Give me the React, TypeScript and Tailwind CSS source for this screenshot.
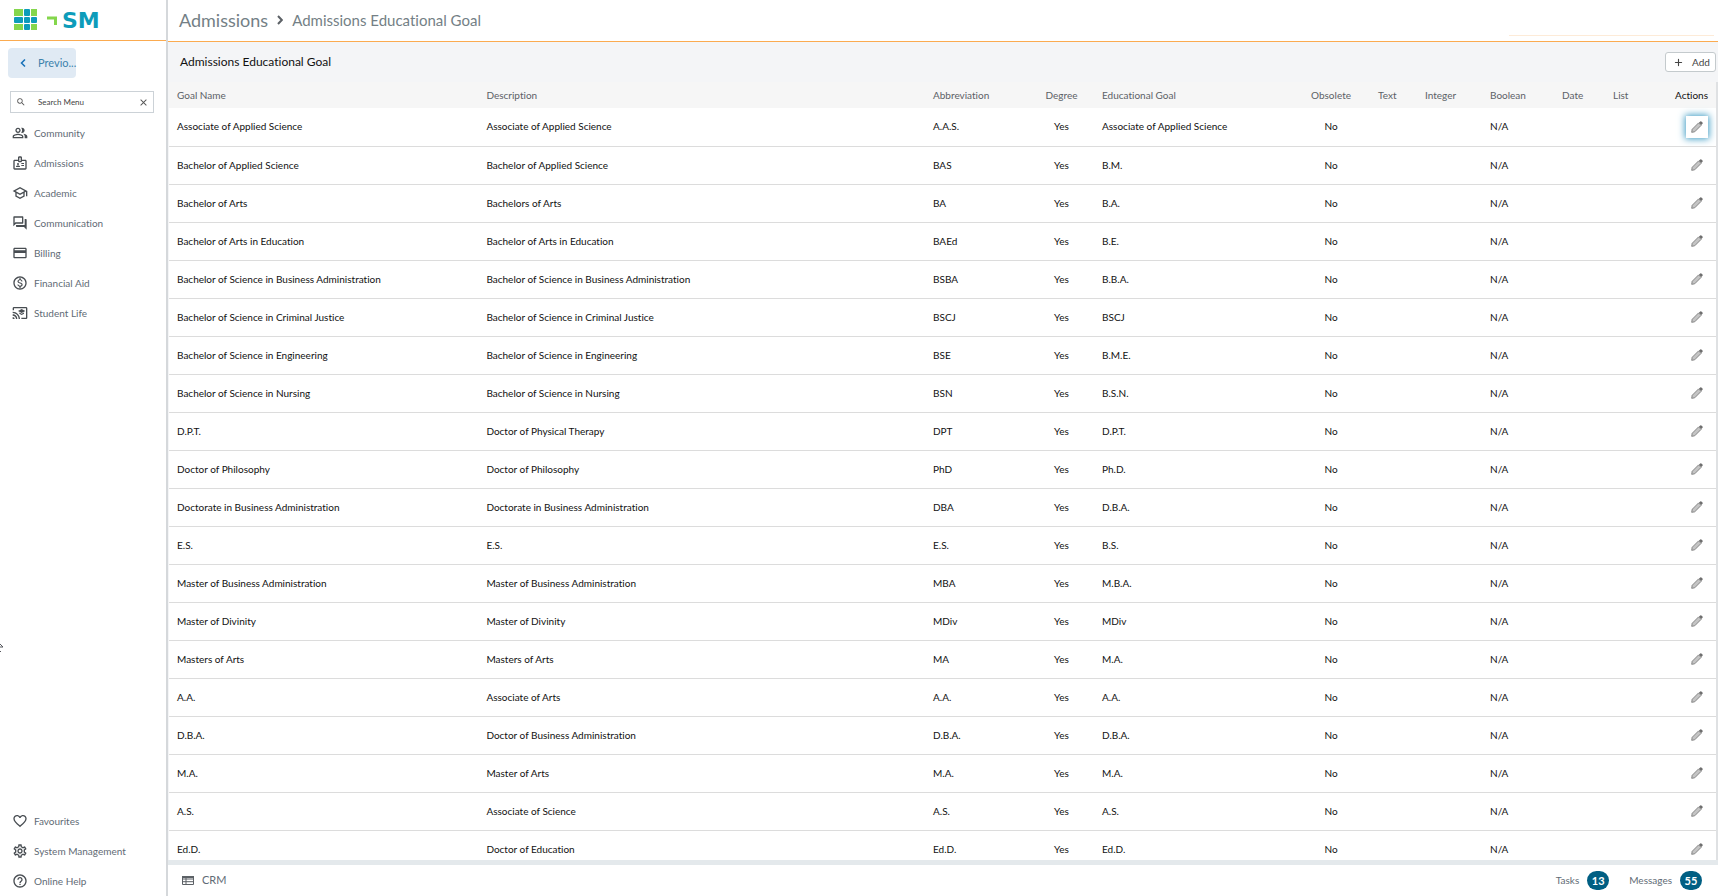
import { useState } from "react";
import { FaPlus } from "react-icons/fa6";
import {
  MdClose,
  MdFavoriteBorder,
  MdHelpOutline,
  MdOutlineBadge,
  MdOutlineCastForEducation,
  MdOutlineCreditCard,
  MdOutlineForum,
  MdOutlineMonetizationOn,
  MdOutlinePeopleAlt,
  MdOutlineSchool,
  MdOutlineSettings,
  MdSearch,
} from "react-icons/md";

const mainMenu = [
  { label: "Community", icon: MdOutlinePeopleAlt },
  { label: "Admissions", icon: MdOutlineBadge },
  { label: "Academic", icon: MdOutlineSchool },
  { label: "Communication", icon: MdOutlineForum },
  { label: "Billing", icon: MdOutlineCreditCard },
  { label: "Financial Aid", icon: MdOutlineMonetizationOn },
  { label: "Student Life", icon: MdOutlineCastForEducation },
];

const bottomMenu = [
  { label: "Favourites", icon: MdFavoriteBorder },
  { label: "System Management", icon: MdOutlineSettings },
  { label: "Online Help", icon: MdHelpOutline },
];

// name, description, abbreviation, educational goal
const goals = [
  ["Associate of Applied Science", "Associate of Applied Science", "A.A.S.", "Associate of Applied Science"],
  ["Bachelor of Applied Science", "Bachelor of Applied Science", "BAS", "B.M."],
  ["Bachelor of Arts", "Bachelors of Arts", "BA", "B.A."],
  ["Bachelor of Arts in Education", "Bachelor of Arts in Education", "BAEd", "B.E."],
  ["Bachelor of Science in Business Administration", "Bachelor of Science in Business Administration", "BSBA", "B.B.A."],
  ["Bachelor of Science in Criminal Justice", "Bachelor of Science in Criminal Justice", "BSCJ", "BSCJ"],
  ["Bachelor of Science in Engineering", "Bachelor of Science in Engineering", "BSE", "B.M.E."],
  ["Bachelor of Science in Nursing", "Bachelor of Science in Nursing", "BSN", "B.S.N."],
  ["D.P.T.", "Doctor of Physical Therapy", "DPT", "D.P.T."],
  ["Doctor of Philosophy", "Doctor of Philosophy", "PhD", "Ph.D."],
  ["Doctorate in Business Administration", "Doctorate in Business Administration", "DBA", "D.B.A."],
  ["E.S.", "E.S.", "E.S.", "B.S."],
  ["Master of Business Administration", "Master of Business Administration", "MBA", "M.B.A."],
  ["Master of Divinity", "Master of Divinity", "MDiv", "MDiv"],
  ["Masters of Arts", "Masters of Arts", "MA", "M.A."],
  ["A.A.", "Associate of Arts", "A.A.", "A.A."],
  ["D.B.A.", "Doctor of Business Administration", "D.B.A.", "D.B.A."],
  ["M.A.", "Master of Arts", "M.A.", "M.A."],
  ["A.S.", "Associate of Science", "A.S.", "A.S."],
  ["Ed.D.", "Doctor of Education", "Ed.D.", "Ed.D."],
];

function Logo() {
  return (
    <svg width="92" height="24" viewBox="0 0 92 24" role="img" aria-label="SM">
      <g fill="#84d64c">
        <rect x="0" y="1" width="9" height="7" />
        <rect x="17" y="1" width="6" height="7" />
        <rect x="0" y="16" width="9" height="6" />
        <rect x="17" y="16" width="6" height="6" />
      </g>
      <g fill="#0d9cba">
        <rect x="10" y="1" width="6" height="7" rx="1" />
        <rect x="0" y="9" width="9" height="6" rx="1" />
        <rect x="10" y="9" width="6" height="6" rx="1" />
        <rect x="17" y="9" width="6" height="6" rx="1" />
        <rect x="10" y="16" width="6" height="6" rx="1" />
      </g>
      <path d="M33 10H41.500V17" fill="none" stroke="#84d64c" strokeWidth="3" />
      <text x="48" y="20" fill="#0d9cba" className="font-[DejaVu_Sans,sans-serif] text-[22px] font-bold">SM</text>
    </svg>
  );
}

function Pencil() {
  return (
    <svg width="12" height="12" viewBox="0 0 12 12" aria-hidden="true">
      <path d="M.7 11.300L1.200 8.300L7.600 1.900L10.100 4.400L3.700 10.800Z" fill="#c4c4c4" stroke="#858585" strokeLinejoin="round" />
      <path d="M7.900 1.700L9.200.500Q9.800 0 10.400.500L11.500 1.600Q12 2.200 11.500 2.800L10.300 4.100Z" fill="#6e6e6e" />
    </svg>
  );
}

function Menu({ items }: { items: typeof mainMenu }) {
  return (
    <ul>
      {items.map(({ label, icon: Icon }) => (
        <li key={label}>
          <a href="#" className="flex h-[30px] items-center gap-[6px] pl-3 text-[#5f6b75] hover:bg-gray-100">
            <Icon size={16} className="text-[#484d52]" />
            {label}
          </a>
        </li>
      ))}
    </ul>
  );
}

export default function App() {
  const [search, setSearch] = useState("");
  const [active, setActive] = useState(0);

  return (
    <div className="relative flex h-screen overflow-hidden bg-white font-[Lato,sans-serif] text-[10px] text-[#111] [font-variant-ligatures:none]">
      {/* Sidebar */}
      <aside className="flex w-[168px] shrink-0 flex-col border-r-2 border-[#d5d8db]">
        <div className="flex h-[41px] shrink-0 items-center border-b border-[#fbab50] pl-[14px]">
          <Logo />
        </div>
        <div className="px-2 pt-[7px]">
          <button className="flex h-[30px] w-[68px] items-center gap-3 rounded bg-[#e0eaf4] pl-3 text-[11px] text-[#3d82ac]">
            <svg width="6" height="8" viewBox="0 0 6 8" className="shrink-0">
              <path d="M5 .5L1.500 4L5 7.500" fill="none" stroke="#1570b8" strokeWidth="1.500" />
            </svg>
            Previo...
          </button>
        </div>
        <div className="mx-[10px] mt-[13px] mb-[5px] flex h-[22px] w-[144px] shrink-0 items-center border border-[#ccd2d7] pr-1 pl-[5px]">
          <MdSearch size={10} className="shrink-0 text-[#555]" />
          <input
            aria-label="Search Menu"
            placeholder="Search Menu"
            value={search}
            onChange={(e) => setSearch(e.target.value)}
            className="ml-3 min-w-0 flex-1 text-[8px] outline-none placeholder:text-[#444]"
          />
          <button aria-label="Clear search" onClick={() => setSearch("")}>
            <MdClose size={11} className="text-[#555]" />
          </button>
        </div>
        <nav className="flex flex-1 flex-col justify-between">
          <Menu items={mainMenu} />
          <Menu items={bottomMenu} />
        </nav>
      </aside>

      <main className="flex min-w-0 flex-1 flex-col">
        {/* Breadcrumb */}
        <header className="flex h-[42px] shrink-0 items-center border-b border-[#fbab50] pr-1 pb-px pl-[11px] text-[#747f86]">
          <a href="#" className="text-[18px]">Admissions</a>
          <svg width="6" height="10" viewBox="0 0 6 10" className="mx-[9px]">
            <path d="M1 1L4.800 5L1 9" fill="none" stroke="#5c6166" strokeWidth="2" />
          </svg>
          <h1 className="text-[15px]">Admissions Educational Goal</h1>
          <span className="mb-1 ml-auto w-[205px] self-end border-b border-[#fdebd8]" />
        </header>

        <section className="flex min-h-0 flex-1 flex-col border-b-[5px] border-[#e4e9ec] bg-[#f4f5f7]">
          <div className="flex h-10 shrink-0 items-center justify-between pr-[2px] pl-3">
            <h2 className="text-[12px]">Admissions Educational Goal</h2>
            <button className="flex h-[20px] w-[51px] items-center gap-[9px] rounded-[3px] border border-[#c4cacd] bg-white pl-2 text-[#444]">
              <FaPlus size={9} />
              Add
            </button>
          </div>

          {/* Goals table */}
          <div className="min-h-0 flex-1 overflow-hidden border-r-2 border-[#dfe1e3] pl-px">
            <table className="w-full table-fixed bg-white text-left">
              <colgroup>
                <col className="w-[20%]" />
                <col />
                <col className="w-[104px]" />
                <col className="w-[65px]" />
                <col className="w-[198px]" />
                <col className="w-[78px]" />
                <col className="w-[47px]" />
                <col className="w-[65px]" />
                <col className="w-[72px]" />
                <col className="w-[51px]" />
                <col className="w-[51px]" />
                <col className="w-[60px]" />
              </colgroup>
              <thead className="bg-[#f6f6f6] text-[#5c6166]">
                <tr className="h-[26px] *:px-2 *:font-normal">
                  <th>Goal Name</th>
                  <th>Description</th>
                  <th>Abbreviation</th>
                  <th className="text-center">Degree</th>
                  <th>Educational Goal</th>
                  <th className="text-center">Obsolete</th>
                  <th>Text</th>
                  <th>Integer</th>
                  <th>Boolean</th>
                  <th>Date</th>
                  <th>List</th>
                  <th className="text-right text-[#111]">Actions</th>
                </tr>
              </thead>
              <tbody>
                {goals.map(([name, description, abbreviation, goal], i) => (
                  <tr key={name} className="h-[38px] border-b border-[#dcdcdc] *:px-2">
                    <td>{name}</td>
                    <td>{description}</td>
                    <td>{abbreviation}</td>
                    <td className="text-center">Yes</td>
                    <td>{goal}</td>
                    <td className="text-center">No</td>
                    <td></td>
                    <td></td>
                    <td>N/A</td>
                    <td></td>
                    <td></td>
                    <td>
                      <button
                        aria-label={`Edit ${name}`}
                        onClick={() => setActive(i)}
                        className={`ml-auto flex size-[22px] items-center justify-center ${active === i ? "bg-white shadow-[0_0_7px_1px_#3f9cc4]" : ""}`}
                      >
                        <Pencil />
                      </button>
                    </td>
                  </tr>
                ))}
              </tbody>
            </table>
          </div>
        </section>

        {/* Status bar */}
        <footer className="flex h-[31px] shrink-0 items-center justify-between pr-4 pl-[14px] text-[#5f6b75]">
          <a href="#" className="flex items-center gap-2 text-[11px]">
            <svg width="12" height="9" viewBox="0 0 12 9">
              <path d="M.5 .5H11.500V8.500H.500ZM.500 3H11.500M.500 5.700H11.500M4 .500V8.500" fill="none" stroke="#5c6166" />
              <path d="M0 0H12V2H0Z" fill="#5c6166" />
            </svg>
            CRM
          </a>
          <div className="flex items-center gap-5">
            <a href="#" className="flex items-center gap-2">
              Tasks
              <span className="w-[22px] rounded-full bg-[#005f83] text-center text-[11px] leading-[19px] font-bold text-white">13</span>
            </a>
            <a href="#" className="flex items-center gap-2">
              Messages
              <span className="w-[22px] rounded-full bg-[#005f83] text-center text-[11px] leading-[19px] font-bold text-white">55</span>
            </a>
          </div>
        </footer>
      </main>

      {/* Pointer resting on the window edge */}
      <svg width="4" height="10" viewBox="0 0 4 10" className="absolute top-[643px] left-0" aria-hidden="true">
        <path d="M0 1L3 4H0M0 8.500H1" fill="none" stroke="#55565c" />
      </svg>
    </div>
  );
}
